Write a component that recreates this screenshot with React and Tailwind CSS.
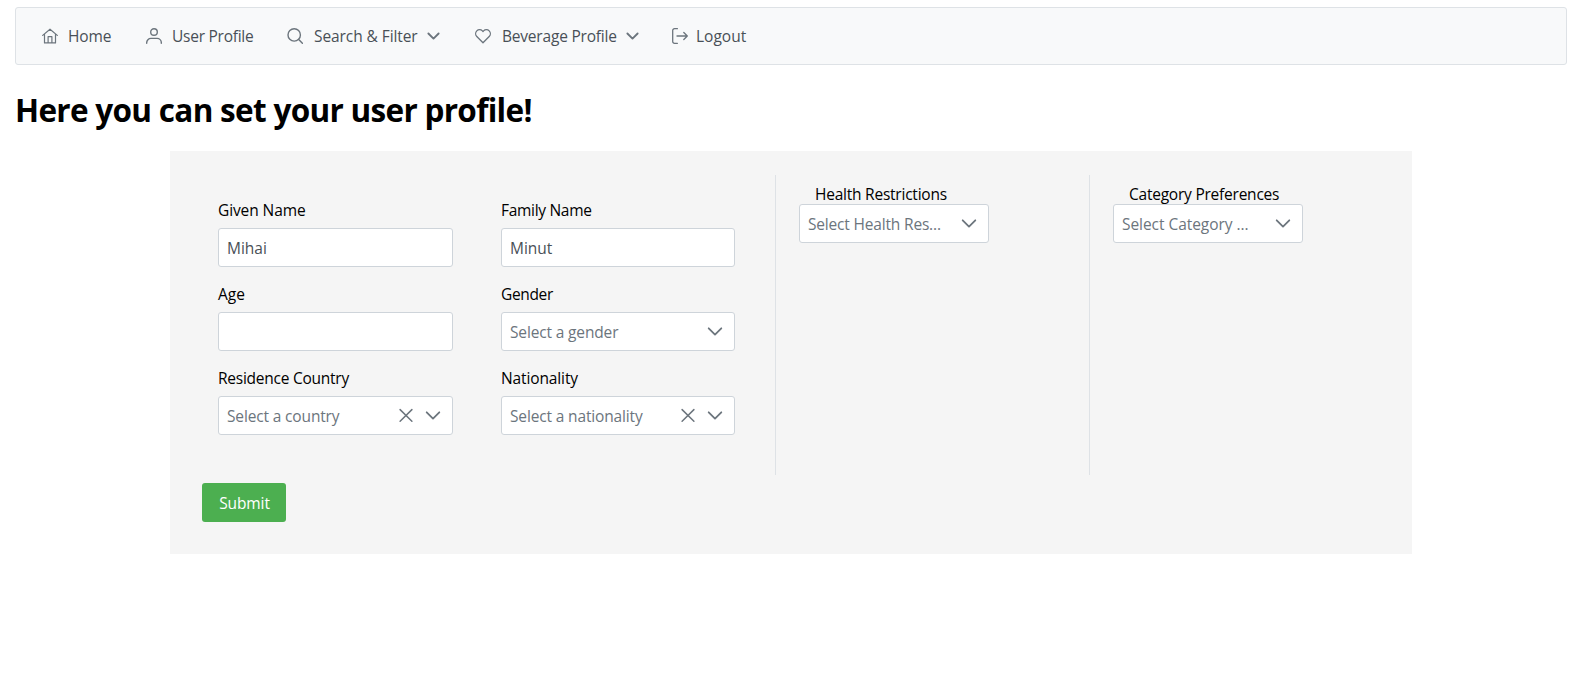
import React from "react";

const svgProps = {
  fill: "none",
  stroke: "currentColor",
  strokeLinecap: "round",
  strokeLinejoin: "round",
};

function HomeIcon() {
  return (
    <svg viewBox="0 0 16 16" className="size-4 shrink-0" strokeWidth="1.2" {...svgProps}>
      <path d="M0.7 7.4 8 1.2l7.3 6.2M2.5 6v8.9h11V6M6.1 14.8V8.6h3.8v6.2" />
    </svg>
  );
}

function UserIcon() {
  return (
    <svg viewBox="0 0 16 16" className="size-4 shrink-0" strokeWidth="1.4" {...svgProps}>
      <circle cx="8" cy="4" r="3.3" />
      <path d="M0.7 15.2v-.6a4.2 4.2 0 0 1 4.2-4.2h6.2a4.2 4.2 0 0 1 4.2 4.2v.6" />
    </svg>
  );
}

function SearchIcon() {
  return (
    <svg viewBox="0 0 16 16" className="size-4 shrink-0" strokeWidth="1.4" {...svgProps}>
      <circle cx="7.2" cy="6.9" r="6.2" />
      <path d="m11.7 11.4 3.700 3.900" />
    </svg>
  );
}

function HeartIcon() {
  return (
    <svg viewBox="0 0 16 16" className="size-4 shrink-0" strokeWidth="1.3" {...svgProps}>
      <path d="M8 14.8 1.8 8.500a4 4 0 0 1 0-5.6 3.9 3.9 0 0 1 5.6 0L8 3.500l.6-.6a3.9 3.9 0 0 1 5.6 0 4 4 0 0 1 0 5.6Z" />
    </svg>
  );
}

function LogoutIcon() {
  return (
    <svg viewBox="0 0 16 16" className="size-4 shrink-0" strokeWidth="1.3" {...svgProps}>
      <path d="M5.4 15.3H2.5A1.8 1.8 0 0 1 .7 13.500V2.500A1.8 1.8 0 0 1 2.500.7h2.900M5 8h10.300M11.800 4.500 15.300 8l-3.500 3.500" />
    </svg>
  );
}

function ChevronIcon({ className, strokeWidth = "1.8" }) {
  return (
    <svg viewBox="0 0 16 16" className={className} strokeWidth={strokeWidth} {...svgProps}>
      <path d="m1.700 4.300 6.300 6.300 6.300-6.300" />
    </svg>
  );
}

function CloseIcon() {
  return (
    <svg viewBox="0 0 16 16" className="size-4 shrink-0" strokeWidth="1.5" {...svgProps}>
      <path d="m2.100 1.600 11.800 11.600M13.900 1.600 2.100 13.200" />
    </svg>
  );
}

function NavItem({ icon, label, width, gap = "ml-[11px]", tracking = "", chevron }) {
  return (
    <a className={"flex items-center text-[#6c757d] " + width}>
      {icon}
      <span className={"whitespace-nowrap pt-0.5 text-[#495057] " + gap + " " + tracking}>{label}</span>
      {chevron && <ChevronIcon className="ml-[9px] size-[13px] shrink-0" strokeWidth="2.3" />}
    </a>
  );
}

function Field({ label, tracking = "", value, placeholder, select, clearable }) {
  return (
    <div className="flex flex-col">
      <label className={"h-[29px] leading-[22px] text-black " + tracking}>{label}</label>
      <div className="flex h-[39px] items-center rounded-[3px] border border-[#ced4da] bg-white pr-[11px] pl-2">
        <span className={"flex-1 whitespace-nowrap pt-0.5 " + (value ? "text-[#495057]" : "tracking-[-0.15px] text-[#6c757d]")}>
          {value || placeholder}
        </span>
        {clearable && <span className="mr-[11px] text-[#6c757d]"><CloseIcon /></span>}
        {select && <ChevronIcon className="size-4 shrink-0 text-[#6c757d]" />}
      </div>
    </div>
  );
}

function MultiSelect({ label, placeholder, tracking }) {
  return (
    <div className="pt-[9px] pl-[23px]">
      <label className="block h-5 pl-4 leading-5 tracking-[-0.23px] text-black">{label}</label>
      <div className="flex h-[39px] w-[190px] items-center rounded-[3px] border border-[#ced4da] bg-white pr-[11px] pl-2">
        <span className={"flex-1 whitespace-nowrap pt-0.5 text-[#6c757d] " + tracking}>{placeholder}</span>
        <ChevronIcon className="size-4 shrink-0 text-[#6c757d]" />
      </div>
    </div>
  );
}

export default function App() {
  return (
    <main className="min-h-[692px] bg-white pt-[7px] font-['Open_Sans',sans-serif] text-[15.5px]">
      <nav className="mr-[26px] ml-[15px] flex h-[58px] items-center rounded-[3px] border border-[#dee2e6] bg-[#f8f9fa] pl-[26px]">
        <NavItem width="w-[104px]" icon={<HomeIcon />} label="Home" gap="ml-2.5" tracking="tracking-[-0.1px]" />
        <NavItem width="w-[141px]" icon={<UserIcon />} label="User Profile" gap="ml-2.5" tracking="tracking-[-0.25px]" />
        <NavItem width="w-[188px]" icon={<SearchIcon />} label="Search & Filter" tracking="tracking-[-0.08px]" chevron />
        <NavItem width="w-[197px]" icon={<HeartIcon />} label="Beverage Profile" tracking="tracking-[-0.2px]" chevron />
        <NavItem width="w-[120px]" icon={<LogoutIcon />} label="Logout" gap="ml-2" />
      </nav>
      <h1 className="mt-[21px] ml-[15px] h-[65px] text-[31.5px] leading-[48px] font-bold tracking-[-0.7px] text-black">
        Here you can set your user profile!
      </h1>
      <section className="ml-[170px] h-[403px] w-[1242px] bg-[#f5f5f5] pt-6">
        <div className="flex h-[300px]">
          <div className="grid w-[606px] grid-cols-[235px_234px] content-start gap-x-12 gap-y-4 border-r border-[#dee2e6] pt-6 pl-12">
            <Field label="Given Name" tracking="tracking-[-0.1px]" value="Mihai" />
            <Field label="Family Name" tracking="tracking-[-0.3px]" value="Minut" />
            <Field label="Age" />
            <Field label="Gender" tracking="tracking-[-0.35px]" placeholder="Select a gender" select />
            <Field label="Residence Country" tracking="tracking-[-0.25px]" placeholder="Select a country" select clearable />
            <Field label="Nationality" tracking="tracking-[-0.12px]" placeholder="Select a nationality" select clearable />
          </div>
          <div className="w-[314px] border-r border-[#dee2e6]">
            <MultiSelect label="Health Restrictions" placeholder="Select Health Res..." tracking="tracking-[-0.18px]" />
          </div>
          <MultiSelect label="Category Preferences" placeholder="Select Category ..." tracking="tracking-[-0.05px]" />
        </div>
        <button className="mt-2 ml-8 h-[39px] w-[84px] rounded-[3px] bg-[#4caf50] pt-0.5 pl-px tracking-[-0.1px] text-white">Submit</button>
      </section>
    </main>
  );
}
